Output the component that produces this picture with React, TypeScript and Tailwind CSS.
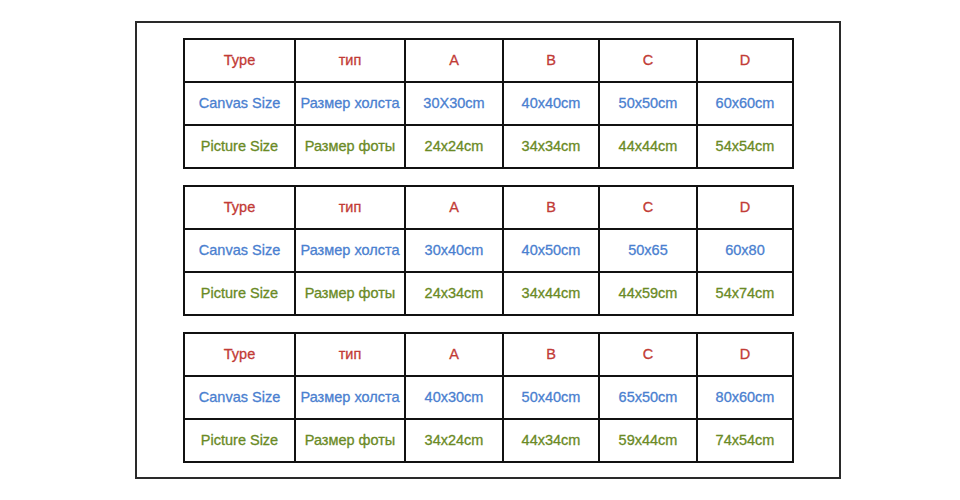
import React from 'react';

const tables = [
  {
    canvas: ['30X30cm', '40x40cm', '50x50cm', '60x60cm'],
    picture: ['24x24cm', '34x34cm', '44x44cm', '54x54cm'],
  },
  {
    canvas: ['30x40cm', '40x50cm', '50x65', '60x80'],
    picture: ['24x34cm', '34x44cm', '44x59cm', '54x74cm'],
  },
  {
    canvas: ['40x30cm', '50x40cm', '65x50cm', '80x60cm'],
    picture: ['34x24cm', '44x34cm', '59x44cm', '74x54cm'],
  },
];

const widths = ['w-[111px]', 'w-[110px]', 'w-[98px]', 'w-[96px]', 'w-[98px]', 'w-[96px]'];

function Row({ cells, color }: { cells: string[]; color: string }) {
  return (
    <tr className="h-[43px]">
      {cells.map((c, i) => (
        <td
          key={i}
          className={`${widths[i]} border-2 border-[#111] text-center align-middle p-0 whitespace-nowrap ${color}`}
        >
          {c}
        </td>
      ))}
    </tr>
  );
}

export default function App() {
  return (
    <div className="min-h-[500px] w-[960px] bg-white pt-[21px] pl-[135px]" style={{ fontFamily: '"Liberation Sans", Arial, sans-serif' }}>
      <div className="w-[706px] h-[458px] border-2 border-[#2a2a2a] pt-[15px] pl-[46px] flex flex-col gap-[16px]">
        {tables.map((t, i) => (
          <table key={i} className="table-fixed border-collapse w-[609px] text-[14.5px] [-webkit-text-stroke:0.3px]">
            <tbody>
              <Row cells={['Type', 'тип', 'A', 'B', 'C', 'D']} color="text-[#c23b36]" />
              <Row cells={['Canvas Size', 'Размер холста', ...t.canvas]} color="text-[#4a80d0]" />
              <Row cells={['Picture Size', 'Размер фоты', ...t.picture]} color="text-[#6a8a25]" />
            </tbody>
          </table>
        ))}
      </div>
    </div>
  );
}
